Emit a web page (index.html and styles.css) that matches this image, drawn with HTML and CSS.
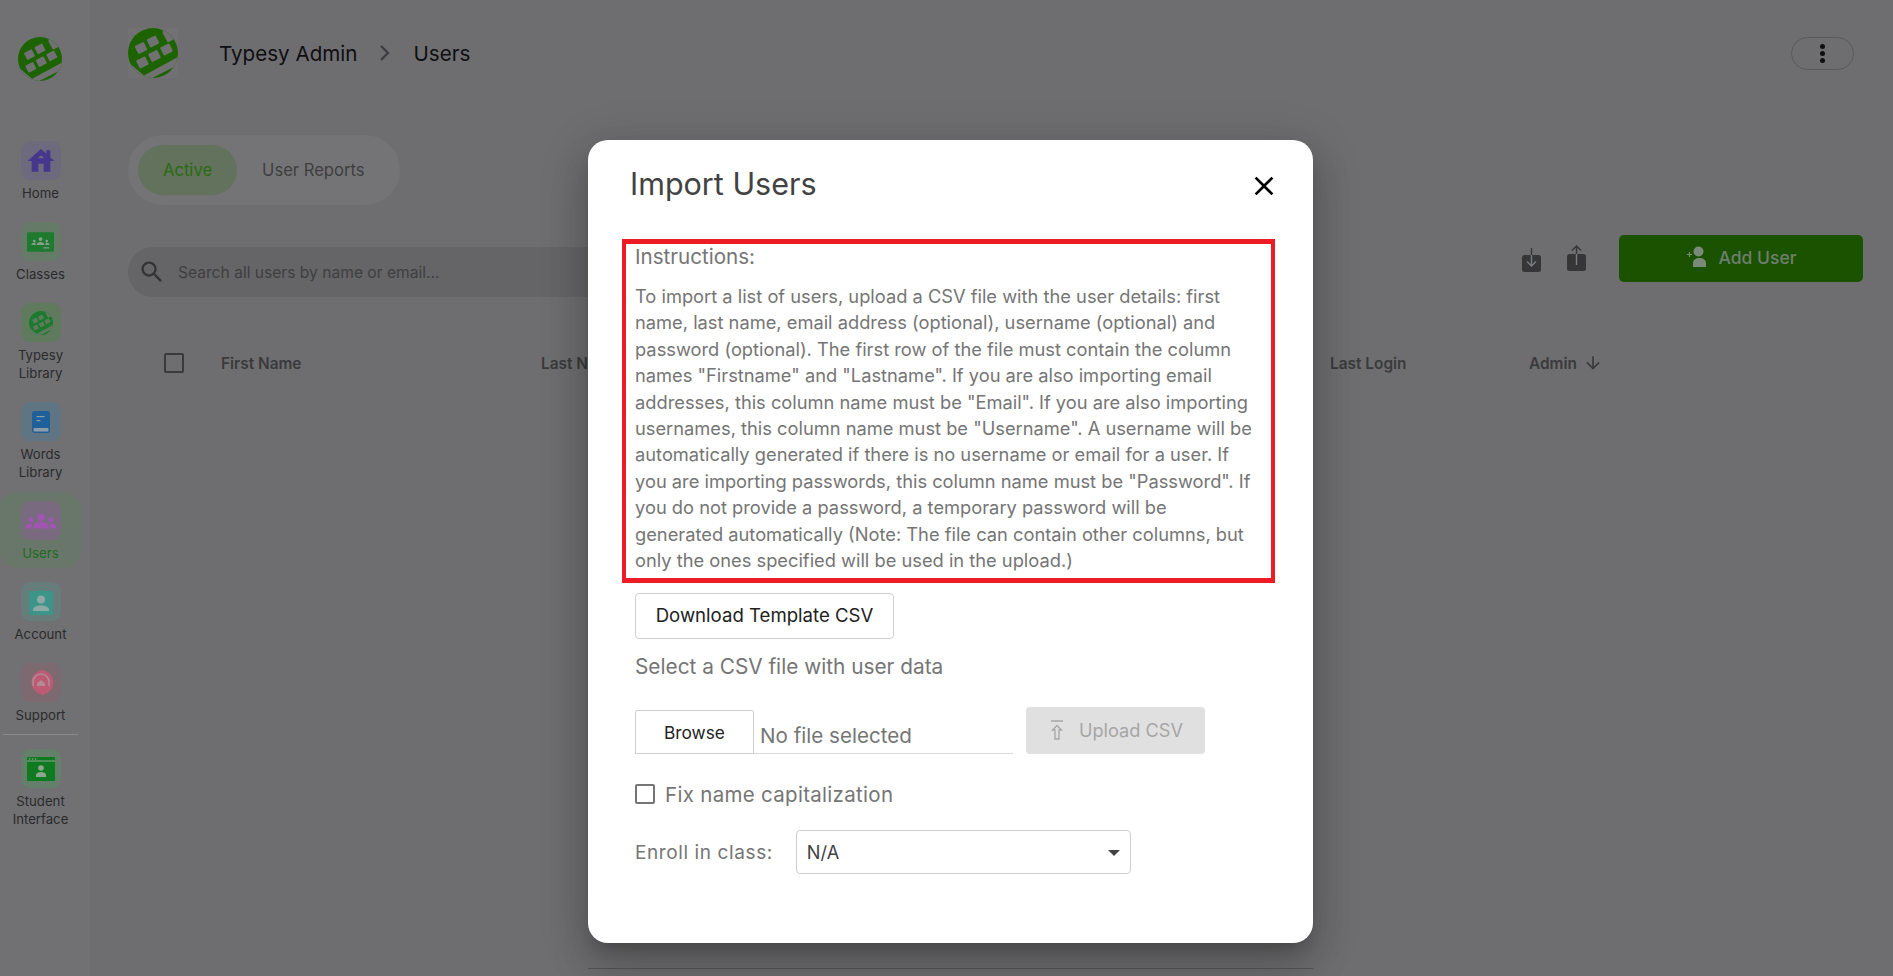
FILE: index.html
```html
<!DOCTYPE html>
<html lang="en">
<head>
    <meta charset="UTF-8">
    <title>Typesy Admin - Users</title>
    <link rel="stylesheet" href="styles.css">
</head>
<body>
    <svg class="defs" width="0" height="0">
        <symbol id="typesy" viewBox="0 0 50 50">
            <clipPath id="logoClip"><circle cx="25" cy="25" r="25"/></clipPath>
            <g clip-path="url(#logoClip)">
                <rect width="50" height="50" fill="currentColor"/>
                <polygon class="cut" points="0,34 16,47.5 48,30 52,28 52,36 25,49.5 22,52 0,52"/>
                <polygon class="cut" points="34.7,0 34.7,5.3 39.8,14.6 52,8 52,0"/>
                <rect class="cut" x="8" y="15.500" width="10" height="9" rx="1" transform="rotate(-27 13 20)"/>
                <rect class="cut" x="20" y="9" width="10" height="9" rx="1" transform="rotate(-27 25 13.500)"/>
                <rect class="cut" x="9.500" y="30" width="10" height="9" rx="1" transform="rotate(-27 14.500 34.500)"/>
                <rect class="cut" x="21.500" y="23.500" width="10" height="9" rx="1" transform="rotate(-27 26.500 28)"/>
                <rect class="cut" x="33.500" y="17" width="10" height="9" rx="1" transform="rotate(-27 38.500 21.500)"/>
            </g>
        </symbol>
        <symbol id="groups" viewBox="0 0 24 24">
            <path d="M12 12.750c1.630 0 3.070.39 4.240.9 1.080.48 1.760 1.560 1.760 2.730V18H6v-1.610c0-1.180.68-2.260 1.760-2.730 1.170-.52 2.610-.91 4.240-.91zM4 13c1.100 0 2-.9 2-2s-.9-2-2-2-2 .9-2 2 .9 2 2 2zm1.130 1.100c-.37-.06-.74-.1-1.130-.1-.99 0-1.930.21-2.780.58C.48 14.900 0 15.620 0 16.430V18h4.500v-1.610c0-.83.23-1.610.63-2.290zM20 13c1.100 0 2-.9 2-2s-.9-2-2-2-2 .9-2 2 .9 2 2 2zm4 3.430c0-.81-.48-1.530-1.220-1.850-.85-.37-1.790-.58-2.780-.58-.39 0-.76.04-1.130.1.4.68.63 1.460.63 2.290V18H24v-1.570zM12 6c1.660 0 3 1.340 3 3s-1.340 3-3 3-3-1.340-3-3 1.340-3 3-3z"/>
        </symbol>
    </svg>

    <div class="app">
        <aside class="sidebar">
            <svg class="side-logo"><use href="#typesy"/></svg>
            <nav class="side-nav">
                <a class="side-item">
                    <span class="side-icon icon-home">
                        <svg viewBox="0 0 24 24"><path d="M19 9.300V4h-3v2.600L12 3 2 12h3v8h5v-6h4v6h5v-8h3l-3-2.700zm-9 .7c0-1.100.9-2 2-2s2 .9 2 2h-4z"/></svg>
                    </span>
                    Home
                </a>
                <a class="side-item">
                    <span class="side-icon icon-classes">
                        <svg viewBox="0 0 28 20">
                            <rect width="28" height="20" rx="1"/>
                            <g fill="#8a9c8d">
                                <circle cx="14" cy="7" r="2"/><path d="M10 13c0-2 2-3 4-3s4 1 4 3z"/>
                                <circle cx="7.500" cy="9" r="1.400"/><path d="M4.500 13c0-1.500 1.200-2.300 3-2.300S9 11 9 13z"/>
                                <circle cx="20.500" cy="9" r="1.400"/><path d="M19 13c0-2 .5-2.300 1.500-2.300s3 .8 3 2.300z"/>
                                <rect x="17" y="15.500" width="6" height="1.200"/>
                            </g>
                        </svg>
                    </span>
                    Classes
                </a>
                <a class="side-item">
                    <span class="side-icon icon-typesy"><svg><use href="#typesy"/></svg></span>
                    Typesy<br>Library
                </a>
                <a class="side-item">
                    <span class="side-icon icon-words">
                        <svg viewBox="0 0 18 22">
                            <path d="M3 0h12a3 3 0 0 1 3 3v16a3 3 0 0 1-3 3H3a3 3 0 0 1-3-3V3a3 3 0 0 1 3-3z"/>
                            <rect x="1.500" y="17" width="15" height="3.500" rx="1" fill="#8c9ca8"/>
                            <rect x="4.500" y="5" width="8" height="1.200" fill="#8c9ca8"/>
                            <rect x="4.500" y="9" width="4" height="1.200" fill="#8c9ca8"/>
                        </svg>
                    </span>
                    Words<br>Library
                </a>
                <a class="side-item active">
                    <span class="side-icon icon-users"><svg><use href="#groups"/></svg></span>
                    Users
                </a>
                <a class="side-item">
                    <span class="side-icon icon-account">
                        <svg viewBox="0 0 24 27">
                            <path d="M2 3h7.500a3 3 0 0 1 5 0H22a2 2 0 0 1 2 2v20a2 2 0 0 1-2 2H2a2 2 0 0 1-2-2V5a2 2 0 0 1 2-2z"/>
                            <circle cx="12" cy="11.500" r="4" fill="#8fa8a4"/>
                            <path d="M4 23v-1.500c0-2.500 4.500-4 8-4s8 1.500 8 4V23z" fill="#8fa8a4"/>
                        </svg>
                    </span>
                    Account
                </a>
                <a class="side-item">
                    <span class="side-icon icon-support">
                        <svg viewBox="0 0 26 26">
                            <path d="M13 0a12.500 12.500 0 0 1 3 24.600L14 26v-1.500A12.500 12.500 0 0 1 13 0z"/>
                            <path d="M5 16v-4a8 8 0 0 1 16 0v4" fill="none" stroke="#b08c96" stroke-width="1.600"/>
                            <path d="M9 16v-2.500l4-3.500 4 3.500V16z" fill="#b08c96"/>
                        </svg>
                    </span>
                    Support
                </a>
                <div class="side-divider"></div>
                <a class="side-item">
                    <span class="side-icon icon-student">
                        <svg viewBox="0 0 28 24">
                            <rect width="28" height="24" rx="1"/>
                            <rect y="3.500" width="28" height="1" fill="#8ea690"/>
                            <rect x="2" y="1.300" width="1.300" height="1.300" fill="#8ea690"/>
                            <rect x="5" y="1.300" width="1.300" height="1.300" fill="#8ea690"/>
                            <rect x="8" y="1.300" width="1.300" height="1.300" fill="#8ea690"/>
                            <circle cx="14" cy="11" r="2.800" fill="#8ea690"/>
                            <path d="M9 20v-2c0-2 2.500-3 5-3s5 1 5 3v2z" fill="#8ea690"/>
                        </svg>
                    </span>
                    Student<br>Interface
                </a>
            </nav>
        </aside>

        <main class="content">
            <header class="topbar">
                <svg class="top-logo"><use href="#typesy"/></svg>
                <span class="crumb crumb-first">Typesy Admin</span>
                <svg class="crumb-sep" viewBox="0 0 12 18"><path d="M2 2l7 7-7 7" fill="none" stroke-width="2.400"/></svg>
                <span class="crumb">Users</span>
                <button class="kebab"><i></i><i></i><i></i></button>
            </header>

            <div class="tabs">
                <span class="tab active">Active</span>
                <span class="tab">User Reports</span>
            </div>

            <div class="toolbar">
                <div class="search">
                    <svg viewBox="0 0 24 24"><path d="M15.500 14h-.79l-.28-.27C15.410 12.590 16 11.110 16 9.500 16 5.910 13.090 3 9.500 3S3 5.910 3 9.500 5.910 16 9.500 16c1.610 0 3.090-.59 4.230-1.570l.27.28v.79l5 4.990L20.490 19l-4.990-5zm-6 0C7.010 14 5 11.990 5 9.500S7.010 5 9.500 5 14 7.010 14 9.500 11.990 14 9.500 14z"/></svg>
                    <span>Search all users by name or email...</span>
                </div>
                <div class="tool-actions">
                    <svg class="tool-icon" viewBox="0 0 19 26">
                        <rect y="9" width="19" height="17" rx="2.500"/>
                        <path d="M9.500 2v7" class="arrow-dark"/>
                        <path d="M9.500 9v11M5 15.500l4.500 4.500 4.500-4.500" class="arrow-light"/>
                    </svg>
                    <svg class="tool-icon tool-up" viewBox="0 0 19 26">
                        <rect y="9" width="19" height="17" rx="2.500"/>
                        <path d="M9.500 9V1M5 5.500L9.500 1 14 5.500" class="arrow-dark"/>
                        <path d="M9.500 9v11" class="arrow-light"/>
                    </svg>
                    <button class="add-user">
                        <svg viewBox="0 0 22 22">
                            <circle cx="12.500" cy="5.500" r="5"/>
                            <path d="M6 21v-4c0-3 3-5 6.500-5s6.500 2 6.500 5v4z" transform="translate(1 0)"/>
                            <path d="M1 8.500h5M3.500 6v5" fill="none" stroke="#7a8a7a" stroke-width="1.200"/>
                        </svg>
                        Add User
                    </button>
                </div>
            </div>

            <div class="table-head">
                <span class="check"></span>
                <span>First Name</span>
                <span>Last Name</span>
                <span>Last Login</span>
                <span class="sort">Admin
                    <svg viewBox="0 0 24 24"><path d="M20 12l-1.410-1.410L13 16.170V4h-2v12.170l-5.580-5.590L4 12l8 8 8-8z"/></svg>
                </span>
            </div>
        </main>
    </div>

    <div class="modal-line"></div>
    <section class="modal">
        <div class="modal-head">
            <h2>Import Users</h2>
            <svg class="modal-close" viewBox="0 0 24 24"><path d="M19 6.410L17.590 5 12 10.590 6.410 5 5 6.410 10.590 12 5 17.590 6.410 19 12 13.410 17.590 19 19 17.590 13.410 12z"/></svg>
        </div>

        <div class="instructions">
            <h3>Instructions:</h3>
            <p>To import a list of users, upload a CSV file with the user details: first<br>
            name, last name, email address (optional), username (optional) and<br>
            password (optional). The first row of the file must contain the column<br>
            names "Firstname" and "Lastname". If you are also importing email<br>
            addresses, this column name must be "Email". If you are also importing<br>
            usernames, this column name must be "Username". A username will be<br>
            automatically generated if there is no username or email for a user. If<br>
            you are importing passwords, this column name must be "Password". If<br>
            you do not provide a password, a temporary password will be<br>
            generated automatically (Note: The file can contain other columns, but<br>
            only the ones specified will be used in the upload.)</p>
        </div>

        <div class="import-form">
            <button class="btn-template">Download Template CSV</button>
            <div class="select-label">Select a CSV file with user data</div>
            <div class="file-row">
                <div class="file-field">
                    <button class="btn-browse">Browse</button>
                    <span class="file-name">No file selected</span>
                </div>
                <button class="btn-upload">
                    <svg viewBox="0 0 14 20"><path d="M1 1h12M5 19v-9H2.500L7 5.500l4.500 4.500H9v9z" fill="none" stroke-width="1.300"/></svg>
                    Upload CSV
                </button>
            </div>
            <label class="fix-row"><span class="check"></span>Fix name capitalization</label>
            <div class="enroll-row">
                <span class="enroll-label">Enroll in class:</span>
                <div class="enroll-select">N/A<i class="caret"></i></div>
            </div>
        </div>
    </section>
</body>
</html>
```

FILE: styles.css
```css
* {
    margin: 0;
    padding: 0;
    box-sizing: border-box;
    font-family: "Inter", "Liberation Sans", sans-serif;
}

body {
    background-color: #6e6e70;
    height: 976px;
    overflow: hidden;
    color: #2a2a2c;
}

button {
    background: none;
    border: none;
}

.defs {
    position: absolute;
}

.cut {
    fill: var(--logo-cut, #717173);
}

.app {
    display: flex;
    height: 976px;
}

/* Sidebar */
.sidebar {
    width: 90px;
    flex-shrink: 0;
    background-color: #717173;
}

.side-logo {
    display: block;
    width: 44px;
    height: 44px;
    margin: 37px 0 51px 18px;
    color: #1d6400;
}

.side-nav {
    width: 81px;
    display: flex;
    flex-direction: column;
    gap: 5px;
}

.side-item {
    display: flex;
    flex-direction: column;
    align-items: center;
    padding: 9px 0 6px;
    border-radius: 16px;
    font-size: 13.2px;
    line-height: 18px;
    text-align: center;
    color: #2a2a2c;
}

.side-item.active {
    background-color: #69766a;
    color: #1f6b1f;
}

.side-icon {
    width: 40px;
    height: 39px;
    margin-bottom: 4px;
    border-radius: 9px;
    display: flex;
    align-items: center;
    justify-content: center;
}

.icon-home { background-color: #6c6a7c; fill: #46378c; }
.icon-home svg { width: 32px; height: 32px; }
.icon-classes { background-color: #667a68; fill: #1d7a2e; }
.icon-classes svg { width: 27px; height: 20px; }
.icon-typesy { background-color: #607a5e; color: #1b7a2e; --logo-cut: #607a5e; }
.icon-typesy svg { width: 24px; height: 24px; }
.icon-words { background-color: #5f7584; fill: #1f5f9a; }
.icon-words svg { width: 18px; height: 22px; }
.icon-users { background-color: #7a6a80; fill: #a055b0; }
.icon-users svg { width: 30px; height: 30px; }
.icon-account { background-color: #667d7b; fill: #3d9488; }
.icon-account svg { width: 24px; height: 27px; }
.icon-support { background-color: #7c6a70; fill: #bd5a74; }
.icon-support svg { width: 26px; height: 26px; }
.icon-student { background-color: #64806a; fill: #0f7a1f; }
.icon-student svg { width: 28px; height: 24px; }

.side-divider {
    height: 1px;
    margin: -1px 3px 0;
    background-color: #8a8a8c;
}

/* Main content */
.content {
    flex: 1;
    min-width: 0;
    padding: 28px 30px 0 38px;
}

.topbar {
    display: flex;
    align-items: center;
    height: 50px;
}

.top-logo {
    width: 50px;
    height: 50px;
    margin-right: 41px;
    color: #1d6400;
    --logo-cut: #717173;
    background-color: #717173;
}

.crumb {
    font-size: 20.6px;
    color: #0e0e12;
}

.crumb-sep {
    width: 12px;
    height: 18px;
    margin: 0 22px;
    stroke: #3e3e42;
}

.kebab {
    margin: 0 9px 0 auto;
    width: 63px;
    height: 33px;
    border: 1px solid #5a5a5c;
    border-radius: 17px;
    display: flex;
    flex-direction: column;
    align-items: center;
    justify-content: center;
    gap: 2px;
}

.kebab i {
    width: 5px;
    height: 5px;
    border-radius: 50%;
    background-color: #0e0e10;
}

.tabs {
    display: inline-flex;
    margin-top: 57px;
    padding: 10px;
    height: 70px;
    background-color: #747476;
    border-radius: 35px;
}

.tab {
    display: flex;
    align-items: center;
    padding: 0 25px;
    height: 50px;
    font-size: 16.6px;
    color: #3e3e40;
    border-radius: 25px;
}

.tab.active {
    background-color: #62725c;
    color: #2a6a10;
}

.toolbar {
    display: flex;
    justify-content: space-between;
    align-items: flex-start;
    margin-top: 30px;
}

.search {
    display: flex;
    align-items: center;
    gap: 12px;
    width: 620px;
    height: 50px;
    margin-top: 12px;
    padding-left: 10px;
    background-color: #656567;
    border-radius: 25px 0 0 25px;
    font-size: 15.6px;
    color: #3e3e40;
}

.search svg {
    width: 28px;
    height: 28px;
    fill: #333335;
}

.tool-actions {
    display: flex;
    align-items: flex-start;
}

.tool-icon {
    width: 19px;
    height: 26px;
    margin-top: 11px;
    margin-right: 26px;
}

.tool-icon rect {
    fill: #363638;
}

.tool-up {
    margin-top: 10px;
    margin-right: 33px;
}

.arrow-dark,
.arrow-light {
    fill: none;
    stroke-width: 1.4;
}

.arrow-dark {
    stroke: #363638;
}

.arrow-light {
    stroke: #7a7c80;
}

.add-user {
    width: 244px;
    height: 47px;
    padding-bottom: 3px;
    display: flex;
    align-items: center;
    justify-content: center;
    gap: 11px;
    background-color: #1a5200;
    border-radius: 5px;
    font-size: 17.5px;
    font-weight: 500;
    color: #6f7f6f;
}

.add-user svg {
    width: 22px;
    height: 22px;
    fill: #7a8a7a;
}

.table-head {
    display: grid;
    grid-template-columns: 57px 320px 789px 199px 140px;
    align-items: center;
    margin-top: 54px;
    padding-left: 36px;
    height: 24px;
    font-size: 15.4px;
    font-weight: 600;
    color: #3a3a3c;
}

.check {
    display: block;
    width: 20px;
    height: 20px;
    border: 2px solid #3a3a3c;
    border-radius: 2px;
}

.sort {
    display: flex;
    align-items: center;
    gap: 6px;
}

.sort svg {
    width: 20px;
    height: 20px;
    fill: #3a3a3c;
}

/* Import modal */
.modal {
    position: absolute;
    left: 588px;
    top: 140px;
    width: 725px;
    height: 803px;
    padding-top: 21px;
    background-color: #ffffff;
    border-radius: 20px;
    box-shadow: 0 11px 15px -7px rgba(0, 0, 0, 0.2), 0 24px 38px 3px rgba(0, 0, 0, 0.14), 0 9px 46px 8px rgba(0, 0, 0, 0.12);
    color: #757575;
}

.modal-line {
    position: absolute;
    left: 588px;
    top: 968px;
    width: 725px;
    height: 1px;
    background-color: #565658;
}

.modal-head {
    display: flex;
    justify-content: space-between;
    align-items: center;
    height: 44px;
    margin: 0 33px 34px 42px;
}

.modal-head h2 {
    font-size: 30.5px;
    font-weight: 400;
    color: #424242;
}

.modal-close {
    width: 32px;
    height: 32px;
    margin-top: 6px;
    fill: #000000;
}

.instructions {
    width: 653px;
    height: 344px;
    margin-left: 34px;
    padding: 0 9px;
    border: solid #ed1c24;
    border-width: 5px 4px;
}

.instructions h3 {
    font-size: 20.6px;
    font-weight: 400;
    line-height: 26px;
}

.instructions p {
    margin-top: 13px;
    font-size: 18.3px;
    line-height: 26.4px;
    white-space: nowrap;
}

.import-form {
    padding: 10px 0 0 47px;
}

.btn-template {
    display: block;
    width: 259px;
    height: 46px;
    padding-bottom: 2px;
    background-color: #ffffff;
    border: 1px solid #cfcfcf;
    border-radius: 4px;
    font-size: 18.6px;
    font-weight: 400;
    color: #212121;
}

.select-label {
    margin-top: 14px;
    font-size: 20.8px;
    line-height: 28px;
}

.file-row {
    display: flex;
    align-items: flex-end;
    margin-top: 26px;
}

.file-field {
    display: flex;
    align-items: flex-end;
    width: 378px;
    height: 44px;
    border-bottom: 1px solid #dcdcdc;
}

.btn-browse {
    width: 119px;
    height: 44px;
    margin-bottom: -1px;
    border: 1px solid #cfcfcf;
    border-radius: 2px 2px 0 0;
    font-size: 17.3px;
    font-weight: 400;
    color: #212121;
}

.file-name {
    margin: 0 0 4px 6px;
    font-size: 20.6px;
    line-height: 26px;
    color: #757575;
}

.btn-upload {
    display: flex;
    align-items: center;
    justify-content: center;
    gap: 15px;
    width: 179px;
    height: 47px;
    margin-left: 13px;
    padding: 0 0 1px 2px;
    background-color: #e0e0e0;
    border-radius: 4px;
    font-size: 18.2px;
    font-weight: 400;
    color: #a6a6a6;
}

.btn-upload svg {
    width: 14px;
    height: 20px;
    stroke: #a6a6a6;
}

.fix-row {
    display: flex;
    align-items: center;
    gap: 10px;
    height: 24px;
    margin-top: 28px;
    font-size: 20.5px;
    letter-spacing: 0.3px;
}

.fix-row .check {
    border-color: #757575;
}

.enroll-row {
    display: flex;
    align-items: center;
    gap: 23px;
    margin-top: 24px;
}

.enroll-label {
    font-size: 19px;
    letter-spacing: 0.6px;
}

.enroll-select {
    position: relative;
    display: flex;
    align-items: center;
    width: 335px;
    height: 44px;
    padding-left: 10px;
    border: 1px solid #cfcfcf;
    border-radius: 4px;
    font-size: 18.2px;
    color: #424242;
}

.caret {
    position: absolute;
    right: 10px;
    top: 19px;
    border-left: 6px solid transparent;
    border-right: 6px solid transparent;
    border-top: 6px solid #424242;
}
```
